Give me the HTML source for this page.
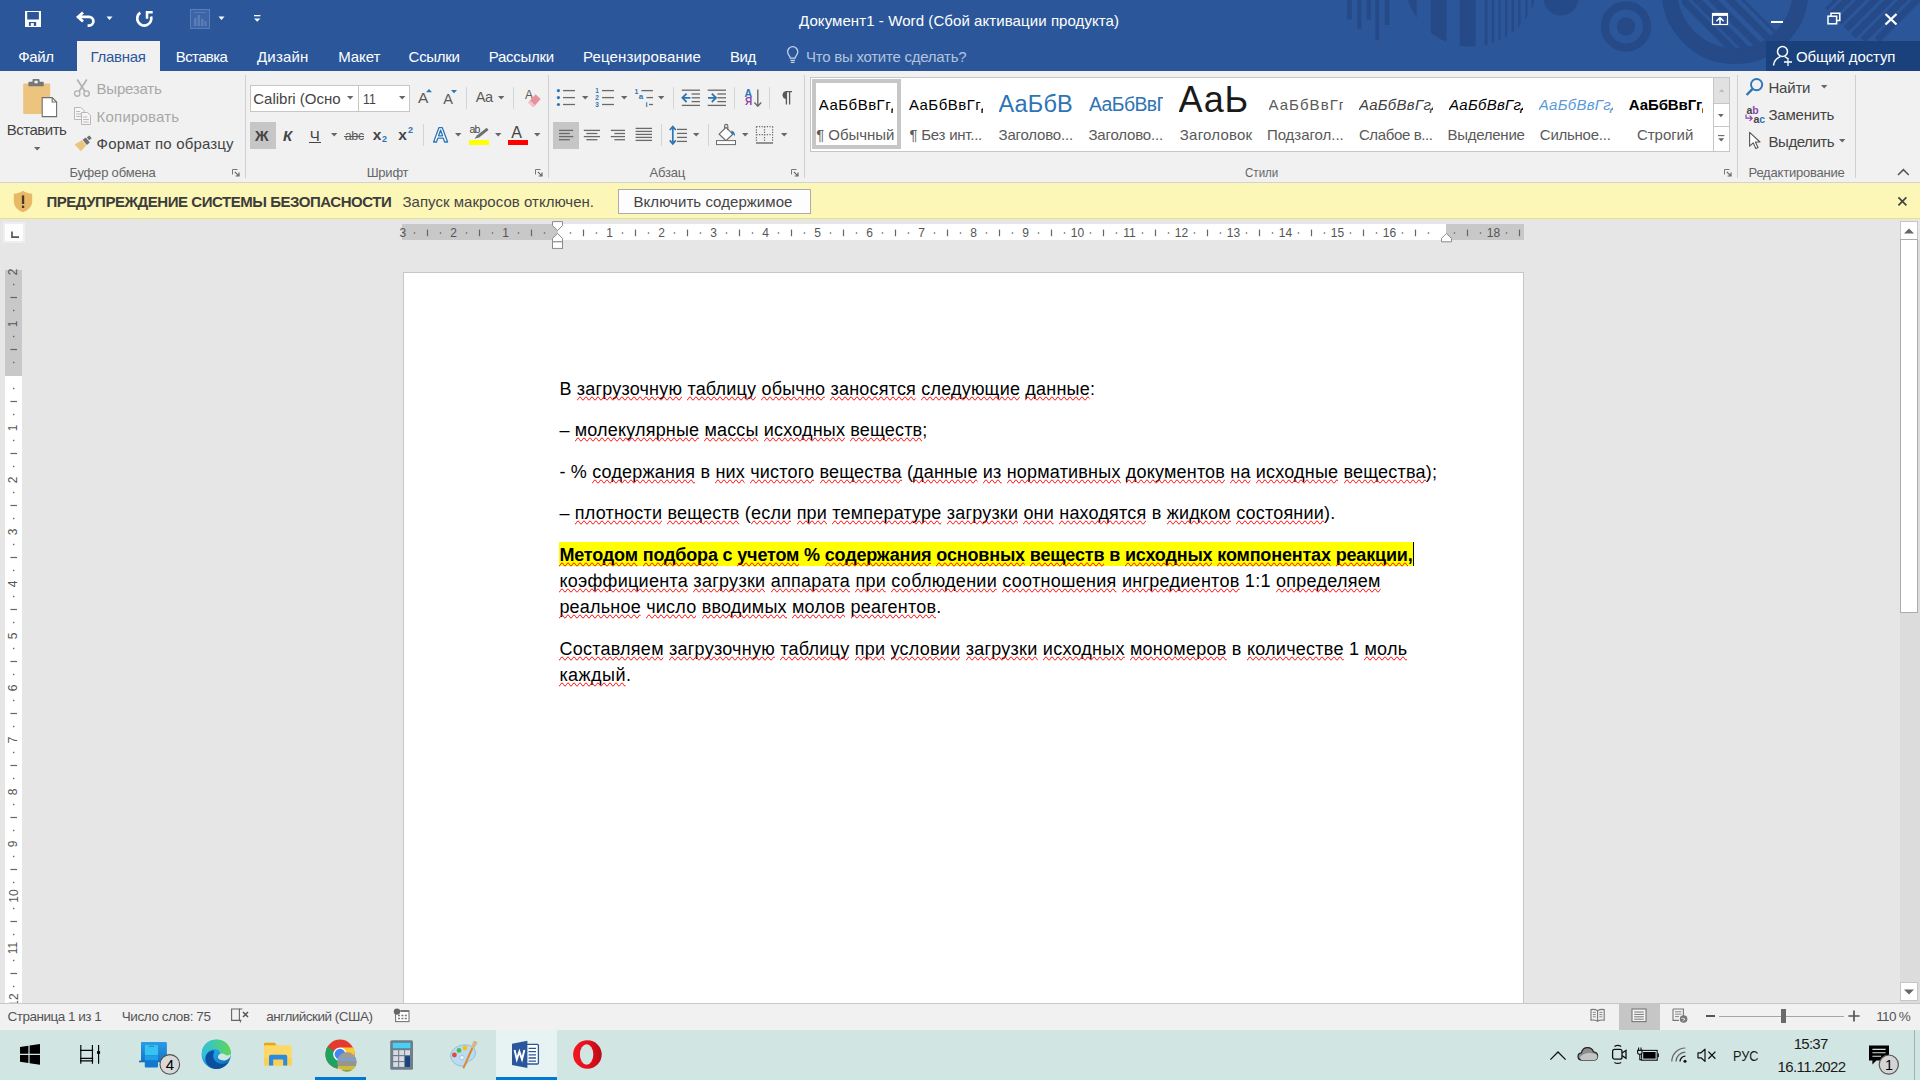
<!DOCTYPE html>
<html><head><meta charset="utf-8"><title>Word</title>
<style>
html,body{margin:0;padding:0;}
body{width:1920px;height:1080px;overflow:hidden;position:relative;background:#e6e6e6;font-family:"Liberation Sans",sans-serif;}
.t{position:absolute;white-space:nowrap;line-height:1;}
.r{position:absolute;}
svg{overflow:visible}
</style></head><body>
<div class="r" style="left:0px;top:0px;width:1920px;height:71px;background:#2b579a;"></div>
<svg class="r" style="left:1320px;top:0px" width="600" height="71" viewBox="0 0 600 71"><g fill="#254a87">
<rect x="27.2" y="0" width="4.6" height="19.5"/><rect x="37.3" y="0" width="4" height="29"/><rect x="46.7" y="0" width="4.3" height="20"/><rect x="55.3" y="0" width="3.9" height="40"/><rect x="64.7" y="0" width="4.7" height="25"/>
<clipPath id="c1"><circle cx="151.5" cy="-20" r="66.6"/></clipPath>
<g clip-path="url(#c1)"><rect x="80" y="0" width="16.7" height="50"/><rect x="110.8" y="0" width="15.6" height="50"/><rect x="139.7" y="0" width="15.9" height="50"/><rect x="164.7" y="0" width="2.8" height="50"/><rect x="171.7" y="0" width="2.4" height="50"/><rect x="178.4" y="0" width="2.3" height="50"/><rect x="185" y="0" width="2.3" height="50"/><rect x="191.6" y="0" width="2.4" height="50"/><rect x="198.3" y="0" width="2.3" height="50"/><rect x="205.3" y="0" width="2.3" height="50"/><rect x="211.6" y="0" width="2.4" height="50"/></g>
<circle cx="241" cy="-1.7" r="17.3"/>
<circle cx="306" cy="26.5" r="9.2"/>
</g>
<circle cx="306" cy="26.5" r="21.1" fill="none" stroke="#254a87" stroke-width="8.2"/>
<clipPath id="c2"><rect x="330" y="0" width="270" height="71"/></clipPath>
<g clip-path="url(#c2)">
<circle cx="415" cy="-9.6" r="65.6" fill="none" stroke="#254a87" stroke-width="16"/>
<clipPath id="c3"><circle cx="421" cy="1" r="59"/></clipPath><clipPath id="c4"><path d="M300 -125L500 75H300Z"/></clipPath>
<g clip-path="url(#c3)"><g clip-path="url(#c4)" stroke="#254a87" stroke-width="7.2" fill="none"><path d="M343 -20L443 80M357 -20L457 80M373 -20L473 80M390 -20L490 80M406 -20L506 80"/></g></g>
<clipPath id="c5"><path d="M505 8L513 0H600V41H538Z"/></clipPath>
<g clip-path="url(#c5)" stroke="#254a87" stroke-width="7" fill="none"><path d="M533 -20L473 40M547 -20L487 40M561 -20L501 40M575 -20L515 40M589 -20L529 40M603 -20L543 40M617 -20L557 40"/></g>
</g></svg>
<div class="r" style="left:0px;top:71px;width:1920px;height:112px;background:#f1f1f1;"></div>
<div class="r" style="left:0px;top:182px;width:1920px;height:1px;background:#d2d2d2;"></div>
<div class="r" style="left:77px;top:41px;width:83px;height:31px;background:#f1f1f1;"></div>
<div class="r" style="left:1766px;top:41px;width:154px;height:30px;background:#1a417c;"></div>
<svg class="r" style="left:24px;top:10px" width="18" height="18" viewBox="0 0 18 18"><path d="M1 1H17V17H1Z" fill="#fff"/><rect x="3.2" y="2" width="11.7" height="7.5" fill="#2b579a"/><rect x="4.9" y="12" width="7.3" height="3.9" fill="#2b579a"/><rect x="6.8" y="13.1" width="3" height="2.8" fill="#fff"/></svg>
<svg class="r" style="left:76px;top:11px" width="22" height="18" viewBox="0 0 22 18"><path d="M7 1.4L2 5.9L7 10.4M2.4 5.9H13A4.4 4.4 0 0 1 13 14.7H11.6" fill="none" stroke="#fff" stroke-width="2.7" stroke-linejoin="miter"/></svg>
<svg class="r" style="left:106px;top:16px" width="8" height="5" viewBox="0 0 8 5"><path d="M0.5 0.5h6l-3 3.4z" fill="#fff"/></svg>
<svg class="r" style="left:135px;top:9px" width="20" height="20" viewBox="0 0 20 20"><path d="M5.26 3.72A7.05 7.05 0 1 0 16.06 7.5" fill="none" stroke="#fff" stroke-width="2.7"/><path d="M12 9.8V3.3H17.7" fill="none" stroke="#fff" stroke-width="2.5"/></svg>
<svg class="r" style="left:189px;top:8px" width="22" height="22" viewBox="0 0 22 22"><rect x="1.5" y="1.5" width="19" height="19" fill="#3b65a6" stroke="#5a7db5" stroke-width="1"/><path d="M5 4.5h12" stroke="#5a7db5"/><rect x="5" y="10" width="2.5" height="8" fill="#5a7db5"/><rect x="8.5" y="7" width="2.5" height="11" fill="#5a7db5"/><rect x="12" y="11" width="2.5" height="7" fill="#5a7db5"/><rect x="15.5" y="13" width="2" height="5" fill="#5a7db5"/></svg>
<svg class="r" style="left:218px;top:16px" width="8" height="5" viewBox="0 0 8 5"><path d="M0.5 0.5h6l-3 3.4z" fill="#fff"/></svg>
<svg class="r" style="left:253px;top:14px" width="9" height="9" viewBox="0 0 9 9"><rect x="1" y="1" width="6.4" height="1.3" fill="#fff"/><path d="M1 4.4h6.4l-3.2 3.4z" fill="#fff"/></svg>
<div class="t" style="left:799.0px;top:12.8px;font-size:15px;color:#ffffff;letter-spacing:0.08px;">Документ1 - Word (Сбой активации продукта)</div>
<svg class="r" style="left:1711px;top:12px" width="18" height="14" viewBox="0 0 18 14"><rect x="1.5" y="1.5" width="15" height="11" fill="none" stroke="#fff" stroke-width="1.2"/><rect x="1.5" y="1.5" width="15" height="2.4" fill="#fff"/><path d="M9 5.6 L5.4 9.3 M9 5.6 L12.6 9.3 M9 6 V12" stroke="#fff" stroke-width="1.5" fill="none"/></svg>
<div class="r" style="left:1771px;top:20.5px;width:12px;height:2.5px;background:#ffffff;"></div>
<svg class="r" style="left:1827px;top:12px" width="14" height="13" viewBox="0 0 14 13"><rect x="1" y="4.2" width="8.6" height="7.6" fill="none" stroke="#fff" stroke-width="1.5"/><path d="M4 4 V1.2 H12.8 V8.6 H10" fill="none" stroke="#fff" stroke-width="1.5"/></svg>
<svg class="r" style="left:1884px;top:13px" width="14" height="13" viewBox="0 0 14 13"><path d="M1.5 1 L12.5 11.5 M12.5 1 L1.5 11.5" stroke="#fff" stroke-width="2.3"/></svg>
<div class="t" style="left:18.3px;top:48.8px;font-size:15px;color:#ffffff;letter-spacing:-0.37px;">Файл</div>
<div class="t" style="left:90.5px;top:48.8px;font-size:15px;color:#2b579a;letter-spacing:-0.30px;">Главная</div>
<div class="t" style="left:175.8px;top:48.8px;font-size:15px;color:#ffffff;letter-spacing:-0.62px;">Вставка</div>
<div class="t" style="left:257.0px;top:48.8px;font-size:15px;color:#ffffff;letter-spacing:0.18px;">Дизайн</div>
<div class="t" style="left:338.3px;top:48.8px;font-size:15px;color:#ffffff;letter-spacing:-0.11px;">Макет</div>
<div class="t" style="left:408.6px;top:48.8px;font-size:15px;color:#ffffff;letter-spacing:-0.28px;">Ссылки</div>
<div class="t" style="left:488.8px;top:48.8px;font-size:15px;color:#ffffff;letter-spacing:-0.30px;">Рассылки</div>
<div class="t" style="left:582.9px;top:48.8px;font-size:15px;color:#ffffff;letter-spacing:0.16px;">Рецензирование</div>
<div class="t" style="left:730.0px;top:48.8px;font-size:15px;color:#ffffff;letter-spacing:-0.48px;">Вид</div>
<svg class="r" style="left:786px;top:46px" width="14" height="19" viewBox="0 0 14 19"><path d="M4.3 12.2 C4.3 10 1.6 9 1.6 5.8 A5.1 5.1 0 0 1 11.8 5.8 C11.8 9 9.1 10 9.1 12.2 Z" fill="none" stroke="#c5d2e6" stroke-width="1.3"/><path d="M4.5 14.3h4.4M4.9 16.4h3.6" stroke="#c5d2e6" stroke-width="1.3"/></svg>
<div class="t" style="left:806.0px;top:48.8px;font-size:15px;color:#b3c3de;letter-spacing:-0.25px;">Что вы хотите сделать?</div>
<svg class="r" style="left:1772px;top:45px" width="22" height="22" viewBox="0 0 22 22"><circle cx="10.5" cy="6.5" r="5" fill="none" stroke="#fff" stroke-width="1.5"/><path d="M1.5 20.5 C2 14.5 6 12.6 8.2 11.6 M12.8 11.6 C14 12.2 15 12.8 15.8 13.8" fill="none" stroke="#fff" stroke-width="1.5"/><path d="M12 17h8M16 13v8" stroke="#fff" stroke-width="1.3"/></svg>
<div class="t" style="left:1796.0px;top:48.8px;font-size:15px;color:#ffffff;letter-spacing:-0.12px;">Общий доступ</div>
<div class="r" style="left:245px;top:75px;width:1px;height:103px;background:#d0d0d0;"></div>
<div class="r" style="left:548px;top:75px;width:1px;height:103px;background:#d0d0d0;"></div>
<div class="r" style="left:804px;top:75px;width:1px;height:103px;background:#d0d0d0;"></div>
<div class="r" style="left:1737px;top:75px;width:1px;height:103px;background:#d0d0d0;"></div>
<div class="r" style="left:1855px;top:75px;width:1px;height:103px;background:#d0d0d0;"></div>
<svg class="r" style="left:22px;top:78px" width="36" height="40" viewBox="0 0 36 40"><rect x="1.2" y="5.5" width="27" height="30.4" rx="1" fill="#edc47e"/>
<path d="M6.4 8.3V4.6q0-.8.8-.8h3.3V2q0-.9.9-.9h5.3q.9 0 .9.9v1.8h3.3q.8 0 .8.8v3.7z" fill="#767676"/><rect x="12.5" y="2.7" width="3.2" height="2.6" fill="#f1f1f1"/>
<path d="M20.2 19.6h10l4.4 4.4v14.6H20.2z" fill="#fff" stroke="#6e6e6e" stroke-width="1.1"/><path d="M30.2 19.6v4.4h4.4" fill="none" stroke="#6e6e6e" stroke-width="1.1"/></svg>
<div class="t" style="left:6.8px;top:122.2px;font-size:15px;color:#444444;letter-spacing:-0.50px;">Вставить</div>
<svg class="r" style="left:33.6px;top:146.6px" width="7" height="4" viewBox="0 0 7 4"><path d="M0 0h6.4l-3.2 3.4z" fill="#666"/></svg>
<svg class="r" style="left:73px;top:78px" width="18" height="20" viewBox="0 0 18 20"><path d="M4.2 1.5L12 13.5M13.8 1.5L6 13.5" stroke="#b2b2b2" stroke-width="1.7" fill="none"/><circle cx="4.2" cy="15.6" r="2.7" fill="none" stroke="#b2b2b2" stroke-width="1.4"/><circle cx="13.6" cy="15.6" r="2.7" fill="none" stroke="#b2b2b2" stroke-width="1.4"/></svg>
<div class="t" style="left:96.6px;top:80.8px;font-size:15px;color:#a8a8a8;letter-spacing:-0.23px;">Вырезать</div>
<svg class="r" style="left:73px;top:106px" width="19" height="20" viewBox="0 0 19 20"><path d="M1.5 1.5h6.5l3 3v9h-9.5z" fill="#f6f6f6" stroke="#b8b8b8" stroke-width="1"/><path d="M3.2 5.5h4M3.2 8h6M3.2 10.5h6" stroke="#c4b4c4" stroke-width="1"/><path d="M8.5 6.5h6l3 3v9h-9z" fill="#f6f6f6" stroke="#b8b8b8" stroke-width="1"/><path d="M10.2 11h4M10.2 13.5h5.6M10.2 16h5.6" stroke="#c4b4c4" stroke-width="1"/></svg>
<div class="t" style="left:96.6px;top:108.8px;font-size:15px;color:#a8a8a8;letter-spacing:0.20px;">Копировать</div>
<svg class="r" style="left:74px;top:136px" width="19" height="16" viewBox="0 0 19 16"><path d="M0.6 8.4L8 4.2L12.2 9.5L6.8 15.2Z" fill="#edc47e"/><path d="M8.6 3.8l3.2-2.2 4 5-3 2.4z" fill="#6e6e6e"/><path d="M12.8 1.2l2.7-1.6 2.2 2.7-2.6 1.9z" fill="#6e6e6e"/></svg>
<div class="t" style="left:96.6px;top:136.1px;font-size:15px;color:#444444;letter-spacing:0.15px;">Формат по образцу</div>
<div class="t" style="left:69.4px;top:166.0px;font-size:13px;color:#666666;letter-spacing:-0.19px;">Буфер обмена</div>
<svg class="r" style="left:232px;top:168.5px" width="8" height="8" viewBox="0 0 8 8"><path d="M0.5 5.5V0.5h5" fill="none" stroke="#777" stroke-width="1"/><path d="M2.8 2.8L6.8 6.8M7 3.6V7H3.6" fill="none" stroke="#666" stroke-width="1.2"/></svg>
<div class="r" style="left:250px;top:85px;width:160px;height:27px;background:#fff;box-sizing:border-box;border:1px solid #c6c6c6;"></div>
<div class="r" style="left:357.5px;top:85px;width:1px;height:27px;background:#c6c6c6;"></div>
<div class="t" style="left:253.3px;top:90.5px;font-size:15px;color:#444444;letter-spacing:-0.02px;">Calibri (Осно</div>
<svg class="r" style="left:346.5px;top:96px" width="7" height="4" viewBox="0 0 7 4"><path d="M0 0h6.4l-3.2 3.4z" fill="#666"/></svg>
<div class="t" style="left:362.5px;top:90.5px;font-size:15px;color:#444444;transform:scaleX(0.8220);transform-origin:0 0;">11</div>
<svg class="r" style="left:398.5px;top:96px" width="7" height="4" viewBox="0 0 7 4"><path d="M0 0h6.4l-3.2 3.4z" fill="#666"/></svg>
<div class="t" style="left:418.0px;top:90.4px;font-size:15.5px;color:#5a5a5a;letter-spacing:0.26px;">A</div>
<svg class="r" style="left:426px;top:89px" width="7" height="4" viewBox="0 0 7 4"><path d="M0 3.2h6l-3-3.2z" fill="#2e75b6"/></svg>
<div class="t" style="left:443.3px;top:92.4px;font-size:14.5px;color:#5a5a5a;letter-spacing:0.03px;">A</div>
<svg class="r" style="left:451px;top:89.5px" width="7" height="4" viewBox="0 0 7 4"><path d="M0 0h6l-3 3.2z" fill="#2e75b6"/></svg>
<div class="r" style="left:466px;top:87px;width:1px;height:22px;background:#d4d4d4;"></div>
<div class="r" style="left:513px;top:87px;width:1px;height:22px;background:#d4d4d4;"></div>
<div class="t" style="left:475.8px;top:90.0px;font-size:14.5px;color:#5a5a5a;letter-spacing:-0.52px;">Aa</div>
<svg class="r" style="left:497.8px;top:96px" width="7" height="4" viewBox="0 0 7 4"><path d="M0 0h6.4l-3.2 3.4z" fill="#666"/></svg>
<div class="t" style="left:525.0px;top:89.1px;font-size:12px;color:#5a5a5a;letter-spacing:-0.40px;">A</div>
<svg class="r" style="left:527px;top:93px" width="15" height="15" viewBox="0 0 15 15"><path d="M1.2 9.4L8.6 1.2L13.6 6L6.4 14.2Z" fill="#e8909c"/><path d="M1.2 9.4l1.8-2 5.2 4.8-1.8 2z" fill="#f3c3c8"/></svg>
<div class="r" style="left:250px;top:122px;width:26px;height:27px;background:#c6c6c6;"></div>
<div class="t" style="left:255.0px;top:127.5px;font-size:15px;color:#444444;letter-spacing:2.64px;font-weight:bold;">Ж</div>
<div class="t" style="left:283.0px;top:127.5px;font-size:15px;color:#444444;letter-spacing:2.78px;font-weight:bold;font-style:italic;">К</div>
<div class="t" style="left:309.7px;top:127.5px;font-size:15px;color:#444444;letter-spacing:0.80px;">Ч</div>
<div class="r" style="left:309.2px;top:141.6px;width:11.8px;height:1.3px;background:#444444;"></div>
<svg class="r" style="left:330.6px;top:133px" width="7" height="4" viewBox="0 0 7 4"><path d="M0 0h6.4l-3.2 3.4z" fill="#666"/></svg>
<div class="t" style="left:344.8px;top:129.6px;font-size:12.5px;color:#5a5a5a;letter-spacing:-0.38px;">abc</div>
<div class="r" style="left:344px;top:135.6px;width:20.4px;height:1.2px;background:#5a5a5a;"></div>
<div class="t" style="left:372.8px;top:127.1px;font-size:15.5px;color:#444444;letter-spacing:-0.42px;font-weight:bold;">x</div>
<div class="t" style="left:382.0px;top:135.4px;font-size:9px;color:#2e75b6;letter-spacing:0.50px;font-weight:bold;">2</div>
<div class="t" style="left:398.3px;top:127.1px;font-size:15.5px;color:#444444;letter-spacing:-0.42px;font-weight:bold;">x</div>
<div class="t" style="left:408.0px;top:125.9px;font-size:9px;color:#2e75b6;letter-spacing:0.50px;font-weight:bold;">2</div>
<div class="r" style="left:423px;top:124px;width:1px;height:22px;background:#d4d4d4;"></div>
<svg class="r" style="left:432px;top:126px" width="18" height="18" viewBox="0 0 18 18"><path d="M1.6 16L7 1.6h3.2L15.6 16h-3l-1.3-3.8H5.8L4.5 16z M6.6 9.8h4l-2-5.8z" fill="#fff" stroke="#2e75b6" stroke-width="1.3" stroke-linejoin="round" fill-rule="evenodd"/></svg>
<svg class="r" style="left:454.8px;top:133px" width="7" height="4" viewBox="0 0 7 4"><path d="M0 0h6.4l-3.2 3.4z" fill="#666"/></svg>
<div class="t" style="left:469.4px;top:124.1px;font-size:10.5px;color:#444444;letter-spacing:-0.74px;">ab</div>
<svg class="r" style="left:472px;top:126px" width="18" height="14" viewBox="0 0 18 14"><path d="M2.5 12.8l2.6-3.6 9.6-7.4 1.8 2.2-9.4 7.6z" fill="#6e6e6e"/></svg>
<div class="r" style="left:469px;top:140.2px;width:20px;height:4.6px;background:#ffff00;"></div>
<svg class="r" style="left:494.8px;top:133px" width="7" height="4" viewBox="0 0 7 4"><path d="M0 0h6.4l-3.2 3.4z" fill="#666"/></svg>
<div class="t" style="left:511.3px;top:124.5px;font-size:16px;color:#444444;letter-spacing:2.23px;">A</div>
<div class="r" style="left:508px;top:140.2px;width:20px;height:4.6px;background:#ff0000;"></div>
<svg class="r" style="left:534px;top:133px" width="7" height="4" viewBox="0 0 7 4"><path d="M0 0h6.4l-3.2 3.4z" fill="#666"/></svg>
<div class="t" style="left:366.7px;top:166.0px;font-size:13px;color:#666666;letter-spacing:-0.23px;">Шрифт</div>
<svg class="r" style="left:535px;top:168.5px" width="8" height="8" viewBox="0 0 8 8"><path d="M0.5 5.5V0.5h5" fill="none" stroke="#777" stroke-width="1"/><path d="M2.8 2.8L6.8 6.8M7 3.6V7H3.6" fill="none" stroke="#666" stroke-width="1.2"/></svg>
<svg class="r" style="left:0px;top:0px" width="1" height="1" viewBox="0 0 1 1"><circle cx="558.4" cy="90.6" r="1.6" fill="#2e75b6"/><path d="M563 90.6H575" stroke="#6a6a6a" stroke-width="1.3"/><circle cx="558.4" cy="97.6" r="1.6" fill="#2e75b6"/><path d="M563 97.6H575" stroke="#6a6a6a" stroke-width="1.3"/><circle cx="558.4" cy="104.5" r="1.6" fill="#2e75b6"/><path d="M563 104.5H575" stroke="#6a6a6a" stroke-width="1.3"/></svg>
<svg class="r" style="left:581.8px;top:96px" width="7" height="4" viewBox="0 0 7 4"><path d="M0 0h6.4l-3.2 3.4z" fill="#666"/></svg>
<svg class="r" style="left:0px;top:0px" width="1" height="1" viewBox="0 0 1 1"><path d="M602 90.6H614" stroke="#6a6a6a" stroke-width="1.3"/><path d="M602 97.6H614" stroke="#6a6a6a" stroke-width="1.3"/><path d="M602 104.5H614" stroke="#6a6a6a" stroke-width="1.3"/></svg>
<div class="t" style="left:595.2px;top:87.5px;font-size:6.5px;color:#2e75b6;letter-spacing:0.18px;font-weight:bold;">1</div>
<div class="t" style="left:595.2px;top:94.5px;font-size:6.5px;color:#2e75b6;letter-spacing:0.18px;font-weight:bold;">2</div>
<div class="t" style="left:595.2px;top:101.5px;font-size:6.5px;color:#2e75b6;letter-spacing:0.18px;font-weight:bold;">3</div>
<svg class="r" style="left:620.8px;top:96px" width="7" height="4" viewBox="0 0 7 4"><path d="M0 0h6.4l-3.2 3.4z" fill="#666"/></svg>
<svg class="r" style="left:0px;top:0px" width="1" height="1" viewBox="0 0 1 1"><path d="M641.4 90.6H653" stroke="#6a6a6a" stroke-width="1.3"/><path d="M646.5 97.6H653" stroke="#6a6a6a" stroke-width="1.3"/><path d="M649 104.5H653" stroke="#6a6a6a" stroke-width="1.3"/></svg>
<div class="t" style="left:634.4px;top:87.6px;font-size:7px;color:#2e75b6;letter-spacing:-0.29px;font-weight:bold;">1</div>
<div class="t" style="left:638.8px;top:93.2px;font-size:8px;color:#2e75b6;letter-spacing:0.35px;font-weight:bold;">a</div>
<div class="t" style="left:645.4px;top:100.7px;font-size:7.5px;color:#2e75b6;letter-spacing:-0.08px;font-weight:bold;">i</div>
<svg class="r" style="left:657.8px;top:96px" width="7" height="4" viewBox="0 0 7 4"><path d="M0 0h6.4l-3.2 3.4z" fill="#666"/></svg>
<div class="r" style="left:673px;top:87px;width:1px;height:22px;background:#d4d4d4;"></div>
<svg class="r" style="left:0px;top:0px" width="1" height="1" viewBox="0 0 1 1"><path d="M681.8 90.2H700" stroke="#6a6a6a" stroke-width="1.3"/><path d="M691.6 94H700" stroke="#6a6a6a" stroke-width="1.3"/><path d="M691.6 97.8H700" stroke="#6a6a6a" stroke-width="1.3"/><path d="M691.6 101.6H700" stroke="#6a6a6a" stroke-width="1.3"/><path d="M681.8 105.4H700" stroke="#6a6a6a" stroke-width="1.3"/><path d="M682.4 97.8H690.4M686.6 93.6L682.4 97.8L686.6 102" fill="none" stroke="#2e75b6" stroke-width="1.8"/><path d="M707.7 90.2H726" stroke="#6a6a6a" stroke-width="1.3"/><path d="M717.4 94H726" stroke="#6a6a6a" stroke-width="1.3"/><path d="M717.4 97.8H726" stroke="#6a6a6a" stroke-width="1.3"/><path d="M717.4 101.6H726" stroke="#6a6a6a" stroke-width="1.3"/><path d="M707.7 105.4H726" stroke="#6a6a6a" stroke-width="1.3"/><path d="M708 97.8H716M711.8 93.6L716 97.8L711.8 102" fill="none" stroke="#2e75b6" stroke-width="1.8"/></svg>
<div class="r" style="left:734px;top:87px;width:1px;height:22px;background:#d4d4d4;"></div>
<div class="t" style="left:744.6px;top:87.5px;font-size:10.5px;color:#2e75b6;letter-spacing:0.22px;font-weight:bold;">A</div>
<div class="t" style="left:745.0px;top:97.4px;font-size:10px;color:#8e44ad;letter-spacing:0.01px;font-weight:bold;">Я</div>
<svg class="r" style="left:0px;top:0px" width="1" height="1" viewBox="0 0 1 1"><path d="M757.8 89.6V106M754.4 102.6L757.8 106.2L761.2 102.6" fill="none" stroke="#6a6a6a" stroke-width="1.4"/></svg>
<div class="r" style="left:769px;top:87px;width:1px;height:22px;background:#d4d4d4;"></div>
<svg class="r" style="left:780px;top:91px" width="13" height="14" viewBox="0 0 13 14"><path d="M5.6 0.6H12M6.4 0.6V13.4M9.6 0.6V13.4" stroke="#5a5a5a" stroke-width="1.3" fill="none"/><path d="M6.4 0.6 A3.5 3.5 0 0 0 6.4 7.6Z" fill="#5a5a5a" stroke="#5a5a5a" stroke-width="1"/></svg>
<div class="r" style="left:553px;top:122px;width:26px;height:27px;background:#c6c6c6;"></div>
<svg class="r" style="left:0px;top:0px" width="1" height="1" viewBox="0 0 1 1"><path d="M559 130.4H573.2" stroke="#6a6a6a" stroke-width="1.3"/><path d="M559 133.5H569.8" stroke="#6a6a6a" stroke-width="1.3"/><path d="M559 136.6H573.2" stroke="#6a6a6a" stroke-width="1.3"/><path d="M559 139.7H569.8" stroke="#6a6a6a" stroke-width="1.3"/><path d="M583.8 130.4H600" stroke="#6a6a6a" stroke-width="1.3"/><path d="M586.4 133.5H597.4" stroke="#6a6a6a" stroke-width="1.3"/><path d="M583.8 136.6H600" stroke="#6a6a6a" stroke-width="1.3"/><path d="M586.4 139.7H597.4" stroke="#6a6a6a" stroke-width="1.3"/><path d="M610.8 130.4H625" stroke="#6a6a6a" stroke-width="1.3"/><path d="M614.4 133.5H625" stroke="#6a6a6a" stroke-width="1.3"/><path d="M610.8 136.6H625" stroke="#6a6a6a" stroke-width="1.3"/><path d="M614.4 139.7H625" stroke="#6a6a6a" stroke-width="1.3"/><path d="M635.6 128.4H652" stroke="#6a6a6a" stroke-width="1.3"/><path d="M635.6 131.4H652" stroke="#6a6a6a" stroke-width="1.3"/><path d="M635.6 134.4H652" stroke="#6a6a6a" stroke-width="1.3"/><path d="M635.6 137.4H652" stroke="#6a6a6a" stroke-width="1.3"/><path d="M635.6 140.4H652" stroke="#6a6a6a" stroke-width="1.3"/><path d="M677 129.4H687" stroke="#6a6a6a" stroke-width="1.3"/><path d="M677 133.4H687" stroke="#6a6a6a" stroke-width="1.3"/><path d="M677 137.4H687" stroke="#6a6a6a" stroke-width="1.3"/><path d="M677 141.4H687" stroke="#6a6a6a" stroke-width="1.3"/><path d="M672.8 127V143.5M669.8 130L672.8 126.6L675.8 130M669.8 140.4L672.8 143.9L675.8 140.4" fill="none" stroke="#2e75b6" stroke-width="1.7"/><path d="M719.2 134.2L726 127.4L732.8 134.2L726 140.6Z" fill="#fff" stroke="#6a6a6a" stroke-width="1.2"/><path d="M724.6 129V126a1.6 1.6 0 0 1 3.2 0V130" fill="none" stroke="#6a6a6a" stroke-width="1.1"/><path d="M731.4 130.4c2.6 0.4 3.8 2.6 3.6 6.2c-1-2-2.2-2.8-3.6-3z" fill="#2e75b6"/><rect x="716.5" y="140.6" width="19" height="4" fill="#fff" stroke="#6a6a6a" stroke-width="1"/><path d="M756.4 126.6H772.6M756.4 134.6H772.6M756.4 126.6V142.6M764.5 126.6V142.6M772.6 126.6V142.6" fill="none" stroke="#6a6a6a" stroke-width="1.2" stroke-dasharray="1.2 1.4"/><path d="M756 143H773" stroke="#6a6a6a" stroke-width="1.4"/></svg>
<div class="r" style="left:661px;top:124px;width:1px;height:22px;background:#d4d4d4;"></div>
<div class="r" style="left:708px;top:124px;width:1px;height:22px;background:#d4d4d4;"></div>
<svg class="r" style="left:692.6px;top:133px" width="7" height="4" viewBox="0 0 7 4"><path d="M0 0h6.4l-3.2 3.4z" fill="#666"/></svg>
<svg class="r" style="left:741.8px;top:133px" width="7" height="4" viewBox="0 0 7 4"><path d="M0 0h6.4l-3.2 3.4z" fill="#666"/></svg>
<svg class="r" style="left:780.8px;top:133px" width="7" height="4" viewBox="0 0 7 4"><path d="M0 0h6.4l-3.2 3.4z" fill="#666"/></svg>
<div class="t" style="left:649.4px;top:166.0px;font-size:13px;color:#666666;letter-spacing:-0.15px;">Абзац</div>
<svg class="r" style="left:791px;top:168.5px" width="8" height="8" viewBox="0 0 8 8"><path d="M0.5 5.5V0.5h5" fill="none" stroke="#777" stroke-width="1"/><path d="M2.8 2.8L6.8 6.8M7 3.6V7H3.6" fill="none" stroke="#666" stroke-width="1.2"/></svg>
<div class="r" style="left:810px;top:77px;width:920px;height:75px;background:#fff;box-sizing:border-box;border:1px solid #c6c6c6;"></div>
<div class="r" style="left:811.5px;top:79px;width:89.5px;height:70px;background:#fff;box-sizing:border-box;border:4.6px solid #c6c6c6;"></div>
<div class="r" style="left:818.8px;top:93.3px;width:74.4px;height:28px;overflow:hidden;"><div class="t" style="position:absolute;left:0;top:4px;font-size:15px;color:#000;letter-spacing:0.48px;">АаБбВвГгД</div></div>
<div class="t" style="left:816.2px;top:126.6px;font-size:15px;color:#5a5a5a;letter-spacing:-0.04px;">¶ Обычный</div>
<div class="r" style="left:908.9px;top:93.3px;width:74.3px;height:28px;overflow:hidden;"><div class="t" style="position:absolute;left:0;top:4px;font-size:15px;color:#000;letter-spacing:0.48px;">АаБбВвГгД</div></div>
<div class="t" style="left:909.5px;top:126.6px;font-size:15px;color:#5a5a5a;letter-spacing:-0.25px;">¶ Без инт...</div>
<div class="r" style="left:998.5px;top:88.7px;width:74.7px;height:39px;overflow:hidden;"><div class="t" style="position:absolute;left:0;top:4px;font-size:23.5px;color:#2e74b5;letter-spacing:0.17px;">АаБбВвГ</div></div>
<div class="t" style="left:998.5px;top:126.6px;font-size:15px;color:#5a5a5a;letter-spacing:-0.18px;">Заголово...</div>
<div class="r" style="left:1089.0px;top:90.8px;width:74.2px;height:33px;overflow:hidden;"><div class="t" style="position:absolute;left:0;top:4px;font-size:19.4px;color:#2e74b5;letter-spacing:-0.58px;">АаБбВвГг</div></div>
<div class="t" style="left:1088.4px;top:126.6px;font-size:15px;color:#5a5a5a;letter-spacing:-0.17px;">Заголово...</div>
<div class="r" style="left:1178.6px;top:78.1px;width:73.4px;height:55px;overflow:hidden;"><div class="t" style="position:absolute;left:0;top:4px;font-size:36px;color:#1a1a1a;letter-spacing:0.78px;">АаЬ</div></div>
<div class="t" style="left:1179.8px;top:126.6px;font-size:15px;color:#5a5a5a;letter-spacing:0.23px;">Заголовок</div>
<div class="r" style="left:1268.5px;top:93.3px;width:74.7px;height:28px;overflow:hidden;"><div class="t" style="position:absolute;left:0;top:4px;font-size:15px;color:#5a5a5a;letter-spacing:1.04px;">АаБбВвГгД</div></div>
<div class="t" style="left:1266.9px;top:126.6px;font-size:15px;color:#5a5a5a;letter-spacing:-0.03px;">Подзагол...</div>
<div class="r" style="left:1358.9px;top:93.3px;width:74.3px;height:28px;overflow:hidden;"><div class="t" style="position:absolute;left:0;top:4px;font-size:15px;color:#404040;letter-spacing:0.28px;font-style:italic;">АаБбВвГгД</div></div>
<div class="t" style="left:1358.9px;top:126.6px;font-size:15px;color:#5a5a5a;letter-spacing:-0.37px;">Слабое в...</div>
<div class="r" style="left:1449.0px;top:93.3px;width:74.3px;height:28px;overflow:hidden;"><div class="t" style="position:absolute;left:0;top:4px;font-size:15px;color:#000;letter-spacing:0.28px;font-style:italic;">АаБбВвГгД</div></div>
<div class="t" style="left:1447.4px;top:126.6px;font-size:15px;color:#5a5a5a;letter-spacing:-0.25px;">Выделение</div>
<div class="r" style="left:1538.8px;top:93.3px;width:74.4px;height:28px;overflow:hidden;"><div class="t" style="position:absolute;left:0;top:4px;font-size:15px;color:#5b9bd5;letter-spacing:0.28px;font-style:italic;">АаБбВвГгД</div></div>
<div class="t" style="left:1539.8px;top:126.6px;font-size:15px;color:#5a5a5a;letter-spacing:-0.25px;">Сильное...</div>
<div class="r" style="left:1628.8px;top:93.3px;width:74.4px;height:28px;overflow:hidden;"><div class="t" style="position:absolute;left:0;top:4px;font-size:15px;color:#000;letter-spacing:-0.10px;font-weight:bold;">АаБбВвГгД</div></div>
<div class="t" style="left:1637.0px;top:126.6px;font-size:15px;color:#5a5a5a;letter-spacing:-0.05px;">Строгий</div>
<div class="r" style="left:1712.5px;top:77px;width:17.5px;height:75px;background:#fff;box-sizing:border-box;border:1px solid #c6c6c6;"></div>
<div class="r" style="left:1713.5px;top:78px;width:15.5px;height:25px;background:#e1e1e1;"></div>
<div class="r" style="left:1712.5px;top:102.5px;width:17.5px;height:1px;background:#c6c6c6;"></div>
<div class="r" style="left:1712.5px;top:126px;width:17.5px;height:1px;background:#c6c6c6;"></div>
<svg class="r" style="left:1718.6px;top:89px" width="6" height="4" viewBox="0 0 6 4"><path d="M0 3h5.4l-2.7-3z" fill="#bdbdbd"/></svg>
<svg class="r" style="left:1718.4px;top:113.6px" width="6" height="4" viewBox="0 0 6 4"><path d="M0 0h5.8l-2.9 3.2z" fill="#666"/></svg>
<svg class="r" style="left:1718.2px;top:134.6px" width="7" height="8" viewBox="0 0 7 8"><path d="M0 0.6h6.4" stroke="#666" stroke-width="1.1"/><path d="M0.2 3.2h6l-3 3.3z" fill="#666"/></svg>
<div class="t" style="left:1244.5px;top:166.0px;font-size:13px;color:#666666;transform:scaleX(0.8891);transform-origin:0 0;">Стили</div>
<svg class="r" style="left:1723.6px;top:168.5px" width="8" height="8" viewBox="0 0 8 8"><path d="M0.5 5.5V0.5h5" fill="none" stroke="#777" stroke-width="1"/><path d="M2.8 2.8L6.8 6.8M7 3.6V7H3.6" fill="none" stroke="#666" stroke-width="1.2"/></svg>
<svg class="r" style="left:1745px;top:77px" width="20" height="20" viewBox="0 0 20 20"><circle cx="11.6" cy="7.6" r="5.6" fill="none" stroke="#2e75b6" stroke-width="1.9"/><path d="M7.6 11.8L1.6 18" stroke="#2e75b6" stroke-width="2.4"/></svg>
<div class="t" style="left:1768.5px;top:79.6px;font-size:15px;color:#444444;letter-spacing:-0.22px;">Найти</div>
<svg class="r" style="left:1820.8px;top:85.4px" width="7" height="4" viewBox="0 0 7 4"><path d="M0 0h6.4l-3.2 3.4z" fill="#666"/></svg>
<div class="t" style="left:1746.4px;top:104.7px;font-size:10.5px;color:#444444;font-weight:bold;">a</div>
<div class="t" style="left:1752.3px;top:104.7px;font-size:10.5px;color:#8e44ad;font-weight:bold;">b</div>
<div class="t" style="left:1753.4px;top:113.7px;font-size:10.5px;color:#444444;font-weight:bold;">a</div>
<div class="t" style="left:1759.3px;top:113.7px;font-size:10.5px;color:#2e75b6;font-weight:bold;">c</div>
<svg class="r" style="left:1745px;top:114px" width="9" height="8" viewBox="0 0 9 8"><path d="M1 0.4V4.2H7M4.6 1.6L7.2 4.2L4.6 6.8" fill="none" stroke="#8e44ad" stroke-width="1.2"/></svg>
<div class="t" style="left:1768.5px;top:107.1px;font-size:15px;color:#444444;letter-spacing:-0.21px;">Заменить</div>
<svg class="r" style="left:1748px;top:131px" width="14" height="19" viewBox="0 0 14 19"><path d="M1.6 1.4V15.2L5.2 11.8L7.8 17.6L10 16.6L7.4 11H12Z" fill="#fff" stroke="#555" stroke-width="1.1" stroke-linejoin="round"/></svg>
<div class="t" style="left:1768.5px;top:133.7px;font-size:15px;color:#444444;letter-spacing:-0.44px;">Выделить</div>
<svg class="r" style="left:1838.6px;top:138.8px" width="7" height="4" viewBox="0 0 7 4"><path d="M0 0h6.4l-3.2 3.4z" fill="#666"/></svg>
<div class="t" style="left:1748.5px;top:166.0px;font-size:13px;color:#666666;letter-spacing:-0.21px;">Редактирование</div>
<svg class="r" style="left:1897px;top:168px" width="13" height="8" viewBox="0 0 13 8"><path d="M1 7L6.4 1.6L11.8 7" fill="none" stroke="#555" stroke-width="1.5"/></svg>
<svg width="0" height="0" style="position:absolute"><defs><pattern id="sq" width="6" height="5" patternUnits="userSpaceOnUse"><path d="M-1.5 2.5Q0 5.6 1.5 2.5T4.5 2.5T7.5 2.5" fill="none" stroke="#ff0000" stroke-width="1"/></pattern></defs></svg>
<style>.d{font-size:18px;color:#000}.w{position:relative;display:inline-block}.w svg{position:absolute;left:0;top:15.8px;width:100%;height:5px;overflow:hidden}</style>
<div class="r" style="left:0px;top:183px;width:1920px;height:35px;background:#fcf7b6;"></div>
<div class="r" style="left:0px;top:218px;width:1920px;height:1px;background:#e9e08c;"></div>
<svg class="r" style="left:13px;top:190px" width="20" height="23" viewBox="0 0 20 23"><path d="M10 0.8C7.6 2.6 4.4 3.6 0.8 3.8V11.5C0.8 16.5 4.6 20.4 10 22.2C15.4 20.4 19.2 16.5 19.2 11.5V3.8C15.6 3.6 12.4 2.6 10 0.8Z" fill="#e9b867"/><rect x="8.9" y="5.4" width="2.3" height="8.6" fill="#4a3a22"/><rect x="8.9" y="15.6" width="2.3" height="2.4" fill="#4a3a22"/></svg>
<div class="t" style="left:46.4px;top:194.3px;font-size:15px;color:#3c3c3c;letter-spacing:-0.46px;font-weight:bold;">ПРЕДУПРЕЖДЕНИЕ СИСТЕМЫ БЕЗОПАСНОСТИ</div>
<div class="t" style="left:402.5px;top:194.3px;font-size:15px;color:#444;letter-spacing:0.02px;">Запуск макросов отключен.</div>
<div class="r" style="left:617.5px;top:188.5px;width:193px;height:25px;background:#fdfdfd;box-sizing:border-box;border:1px solid #ababab;"></div>
<div class="t" style="left:633.5px;top:194.3px;font-size:15px;color:#444;letter-spacing:0.05px;">Включить содержимое</div>
<svg class="r" style="left:1897px;top:196px" width="11" height="11" viewBox="0 0 11 11"><path d="M1.4 1.4L9.4 9.4M9.4 1.4L1.4 9.4" stroke="#444" stroke-width="1.7"/></svg>
<div class="r" style="left:3px;top:222px;width:22px;height:21px;background:#efefef;"></div>
<div class="r" style="left:5px;top:224px;width:18px;height:17px;background:#fdfdfd;"></div>
<svg class="r" style="left:10px;top:231px" width="10" height="8" viewBox="0 0 10 8"><path d="M2 0.6V6.2H9" fill="none" stroke="#555" stroke-width="1.7"/></svg>
<div class="r" style="left:402px;top:224px;width:1122px;height:16px;background:#fff;"></div>
<div class="r" style="left:402px;top:224px;width:155.5px;height:16px;background:#c8c8c8;"></div>
<div class="r" style="left:1446px;top:224px;width:78px;height:16px;background:#c8c8c8;"></div>
<div class="t" style="left:450.2px;top:226.8px;font-size:12px;color:#555;">2</div>
<div class="t" style="left:502.2px;top:226.8px;font-size:12px;color:#555;">1</div>
<div class="t" style="left:606.2px;top:226.8px;font-size:12px;color:#555;">1</div>
<div class="t" style="left:658.2px;top:226.8px;font-size:12px;color:#555;">2</div>
<div class="t" style="left:710.2px;top:226.8px;font-size:12px;color:#555;">3</div>
<div class="t" style="left:762.2px;top:226.8px;font-size:12px;color:#555;">4</div>
<div class="t" style="left:814.2px;top:226.8px;font-size:12px;color:#555;">5</div>
<div class="t" style="left:866.2px;top:226.8px;font-size:12px;color:#555;">6</div>
<div class="t" style="left:918.2px;top:226.8px;font-size:12px;color:#555;">7</div>
<div class="t" style="left:970.2px;top:226.8px;font-size:12px;color:#555;">8</div>
<div class="t" style="left:1022.2px;top:226.8px;font-size:12px;color:#555;">9</div>
<div class="t" style="left:1070.8px;top:226.8px;font-size:12px;color:#555;">10</div>
<div class="t" style="left:1123.3px;top:226.8px;font-size:12px;color:#555;">11</div>
<div class="t" style="left:1174.8px;top:226.8px;font-size:12px;color:#555;">12</div>
<div class="t" style="left:1226.8px;top:226.8px;font-size:12px;color:#555;">13</div>
<div class="t" style="left:1278.8px;top:226.8px;font-size:12px;color:#555;">14</div>
<div class="t" style="left:1330.8px;top:226.8px;font-size:12px;color:#555;">15</div>
<div class="t" style="left:1382.8px;top:226.8px;font-size:12px;color:#555;">16</div>
<div class="t" style="left:1486.8px;top:226.8px;font-size:12px;color:#555;">18</div>
<div class="t" style="left:399.4px;top:226.8px;font-size:12px;color:#555;">3</div>
<svg class="r" style="left:0px;top:0px" width="1" height="1" viewBox="0 0 1 1"><rect x="413.8" y="232.3" width="1.4" height="1.4" fill="#666"/><rect x="426.9" y="229.6" width="1.2" height="6.6" fill="#666"/><rect x="439.8" y="232.3" width="1.4" height="1.4" fill="#666"/><rect x="465.8" y="232.3" width="1.4" height="1.4" fill="#666"/><rect x="478.9" y="229.6" width="1.2" height="6.6" fill="#666"/><rect x="491.8" y="232.3" width="1.4" height="1.4" fill="#666"/><rect x="517.8" y="232.3" width="1.4" height="1.4" fill="#666"/><rect x="530.9" y="229.6" width="1.2" height="6.6" fill="#666"/><rect x="543.8" y="232.3" width="1.4" height="1.4" fill="#666"/><rect x="569.8" y="232.3" width="1.4" height="1.4" fill="#666"/><rect x="582.9" y="229.6" width="1.2" height="6.6" fill="#666"/><rect x="595.8" y="232.3" width="1.4" height="1.4" fill="#666"/><rect x="621.8" y="232.3" width="1.4" height="1.4" fill="#666"/><rect x="634.9" y="229.6" width="1.2" height="6.6" fill="#666"/><rect x="647.8" y="232.3" width="1.4" height="1.4" fill="#666"/><rect x="673.8" y="232.3" width="1.4" height="1.4" fill="#666"/><rect x="686.9" y="229.6" width="1.2" height="6.6" fill="#666"/><rect x="699.8" y="232.3" width="1.4" height="1.4" fill="#666"/><rect x="725.8" y="232.3" width="1.4" height="1.4" fill="#666"/><rect x="738.9" y="229.6" width="1.2" height="6.6" fill="#666"/><rect x="751.8" y="232.3" width="1.4" height="1.4" fill="#666"/><rect x="777.8" y="232.3" width="1.4" height="1.4" fill="#666"/><rect x="790.9" y="229.6" width="1.2" height="6.6" fill="#666"/><rect x="803.8" y="232.3" width="1.4" height="1.4" fill="#666"/><rect x="829.8" y="232.3" width="1.4" height="1.4" fill="#666"/><rect x="842.9" y="229.6" width="1.2" height="6.6" fill="#666"/><rect x="855.8" y="232.3" width="1.4" height="1.4" fill="#666"/><rect x="881.8" y="232.3" width="1.4" height="1.4" fill="#666"/><rect x="894.9" y="229.6" width="1.2" height="6.6" fill="#666"/><rect x="907.8" y="232.3" width="1.4" height="1.4" fill="#666"/><rect x="933.8" y="232.3" width="1.4" height="1.4" fill="#666"/><rect x="946.9" y="229.6" width="1.2" height="6.6" fill="#666"/><rect x="959.8" y="232.3" width="1.4" height="1.4" fill="#666"/><rect x="985.8" y="232.3" width="1.4" height="1.4" fill="#666"/><rect x="998.9" y="229.6" width="1.2" height="6.6" fill="#666"/><rect x="1011.8" y="232.3" width="1.4" height="1.4" fill="#666"/><rect x="1037.8" y="232.3" width="1.4" height="1.4" fill="#666"/><rect x="1050.9" y="229.6" width="1.2" height="6.6" fill="#666"/><rect x="1063.8" y="232.3" width="1.4" height="1.4" fill="#666"/><rect x="1089.8" y="232.3" width="1.4" height="1.4" fill="#666"/><rect x="1102.9" y="229.6" width="1.2" height="6.6" fill="#666"/><rect x="1115.8" y="232.3" width="1.4" height="1.4" fill="#666"/><rect x="1141.8" y="232.3" width="1.4" height="1.4" fill="#666"/><rect x="1154.9" y="229.6" width="1.2" height="6.6" fill="#666"/><rect x="1167.8" y="232.3" width="1.4" height="1.4" fill="#666"/><rect x="1193.8" y="232.3" width="1.4" height="1.4" fill="#666"/><rect x="1206.9" y="229.6" width="1.2" height="6.6" fill="#666"/><rect x="1219.8" y="232.3" width="1.4" height="1.4" fill="#666"/><rect x="1245.8" y="232.3" width="1.4" height="1.4" fill="#666"/><rect x="1258.9" y="229.6" width="1.2" height="6.6" fill="#666"/><rect x="1271.8" y="232.3" width="1.4" height="1.4" fill="#666"/><rect x="1297.8" y="232.3" width="1.4" height="1.4" fill="#666"/><rect x="1310.9" y="229.6" width="1.2" height="6.6" fill="#666"/><rect x="1323.8" y="232.3" width="1.4" height="1.4" fill="#666"/><rect x="1349.8" y="232.3" width="1.4" height="1.4" fill="#666"/><rect x="1362.9" y="229.6" width="1.2" height="6.6" fill="#666"/><rect x="1375.8" y="232.3" width="1.4" height="1.4" fill="#666"/><rect x="1401.8" y="232.3" width="1.4" height="1.4" fill="#666"/><rect x="1414.9" y="229.6" width="1.2" height="6.6" fill="#666"/><rect x="1427.8" y="232.3" width="1.4" height="1.4" fill="#666"/><rect x="1453.8" y="232.3" width="1.4" height="1.4" fill="#666"/><rect x="1466.9" y="229.6" width="1.2" height="6.6" fill="#666"/><rect x="1479.8" y="232.3" width="1.4" height="1.4" fill="#666"/><rect x="1505.8" y="232.3" width="1.4" height="1.4" fill="#666"/><rect x="1518.9" y="229.6" width="1.2" height="6.6" fill="#666"/><path d="M552.5 221.6H562.5V225.6L557.5 230.6L552.5 225.6Z" fill="#fff" stroke="#8a8a8a" stroke-width="1"/><path d="M552.5 241.8V238.4L557.5 233.4L562.5 238.4V241.8Z" fill="#fff" stroke="#8a8a8a" stroke-width="1"/><rect x="552.5" y="241.8" width="10" height="6.6" fill="#fff" stroke="#8a8a8a" stroke-width="1"/><path d="M1441.5 241.8V238.4L1446.5 233.4L1451.5 238.4V241.8Z" fill="#fff" stroke="#8a8a8a" stroke-width="1"/></svg>
<div class="r" style="left:5px;top:270px;width:17px;height:733px;background:#fff;"></div>
<div class="r" style="left:5px;top:270px;width:17px;height:105.5px;background:#c8c8c8;"></div>
<div class="t" style="left:10.2px;top:265.5px;width:6.7px;font-size:12px;color:#555;transform:rotate(-90deg);transform-origin:50% 50%;">2</div>
<div class="t" style="left:10.2px;top:317.5px;width:6.7px;font-size:12px;color:#555;transform:rotate(-90deg);transform-origin:50% 50%;">1</div>
<div class="t" style="left:10.2px;top:421.5px;width:6.7px;font-size:12px;color:#555;transform:rotate(-90deg);transform-origin:50% 50%;">1</div>
<div class="t" style="left:10.2px;top:473.5px;width:6.7px;font-size:12px;color:#555;transform:rotate(-90deg);transform-origin:50% 50%;">2</div>
<div class="t" style="left:10.2px;top:525.5px;width:6.7px;font-size:12px;color:#555;transform:rotate(-90deg);transform-origin:50% 50%;">3</div>
<div class="t" style="left:10.2px;top:577.5px;width:6.7px;font-size:12px;color:#555;transform:rotate(-90deg);transform-origin:50% 50%;">4</div>
<div class="t" style="left:10.2px;top:629.5px;width:6.7px;font-size:12px;color:#555;transform:rotate(-90deg);transform-origin:50% 50%;">5</div>
<div class="t" style="left:10.2px;top:681.5px;width:6.7px;font-size:12px;color:#555;transform:rotate(-90deg);transform-origin:50% 50%;">6</div>
<div class="t" style="left:10.2px;top:733.5px;width:6.7px;font-size:12px;color:#555;transform:rotate(-90deg);transform-origin:50% 50%;">7</div>
<div class="t" style="left:10.2px;top:785.5px;width:6.7px;font-size:12px;color:#555;transform:rotate(-90deg);transform-origin:50% 50%;">8</div>
<div class="t" style="left:10.2px;top:837.5px;width:6.7px;font-size:12px;color:#555;transform:rotate(-90deg);transform-origin:50% 50%;">9</div>
<div class="t" style="left:6.8px;top:889.5px;width:13.3px;font-size:12px;color:#555;transform:rotate(-90deg);transform-origin:50% 50%;">10</div>
<div class="t" style="left:7.3px;top:941.5px;width:12.5px;font-size:12px;color:#555;transform:rotate(-90deg);transform-origin:50% 50%;">11</div>
<div class="t" style="left:6.8px;top:993.5px;width:13.3px;font-size:12px;color:#555;transform:rotate(-90deg);transform-origin:50% 50%;">12</div>
<svg class="r" style="left:0px;top:0px" width="1" height="1" viewBox="0 0 1 1"><rect x="13" y="283.8" width="1.4" height="1.4" fill="#666"/><rect x="10.4" y="296.9" width="6.6" height="1.2" fill="#666"/><rect x="13" y="309.8" width="1.4" height="1.4" fill="#666"/><rect x="13" y="335.8" width="1.4" height="1.4" fill="#666"/><rect x="10.4" y="348.9" width="6.6" height="1.2" fill="#666"/><rect x="13" y="361.8" width="1.4" height="1.4" fill="#666"/><rect x="13" y="387.8" width="1.4" height="1.4" fill="#666"/><rect x="10.4" y="400.9" width="6.6" height="1.2" fill="#666"/><rect x="13" y="413.8" width="1.4" height="1.4" fill="#666"/><rect x="13" y="439.8" width="1.4" height="1.4" fill="#666"/><rect x="10.4" y="452.9" width="6.6" height="1.2" fill="#666"/><rect x="13" y="465.8" width="1.4" height="1.4" fill="#666"/><rect x="13" y="491.8" width="1.4" height="1.4" fill="#666"/><rect x="10.4" y="504.9" width="6.6" height="1.2" fill="#666"/><rect x="13" y="517.8" width="1.4" height="1.4" fill="#666"/><rect x="13" y="543.8" width="1.4" height="1.4" fill="#666"/><rect x="10.4" y="556.9" width="6.6" height="1.2" fill="#666"/><rect x="13" y="569.8" width="1.4" height="1.4" fill="#666"/><rect x="13" y="595.8" width="1.4" height="1.4" fill="#666"/><rect x="10.4" y="608.9" width="6.6" height="1.2" fill="#666"/><rect x="13" y="621.8" width="1.4" height="1.4" fill="#666"/><rect x="13" y="647.8" width="1.4" height="1.4" fill="#666"/><rect x="10.4" y="660.9" width="6.6" height="1.2" fill="#666"/><rect x="13" y="673.8" width="1.4" height="1.4" fill="#666"/><rect x="13" y="699.8" width="1.4" height="1.4" fill="#666"/><rect x="10.4" y="712.9" width="6.6" height="1.2" fill="#666"/><rect x="13" y="725.8" width="1.4" height="1.4" fill="#666"/><rect x="13" y="751.8" width="1.4" height="1.4" fill="#666"/><rect x="10.4" y="764.9" width="6.6" height="1.2" fill="#666"/><rect x="13" y="777.8" width="1.4" height="1.4" fill="#666"/><rect x="13" y="803.8" width="1.4" height="1.4" fill="#666"/><rect x="10.4" y="816.9" width="6.6" height="1.2" fill="#666"/><rect x="13" y="829.8" width="1.4" height="1.4" fill="#666"/><rect x="13" y="855.8" width="1.4" height="1.4" fill="#666"/><rect x="10.4" y="868.9" width="6.6" height="1.2" fill="#666"/><rect x="13" y="881.8" width="1.4" height="1.4" fill="#666"/><rect x="13" y="907.8" width="1.4" height="1.4" fill="#666"/><rect x="10.4" y="920.9" width="6.6" height="1.2" fill="#666"/><rect x="13" y="933.8" width="1.4" height="1.4" fill="#666"/><rect x="13" y="959.8" width="1.4" height="1.4" fill="#666"/><rect x="10.4" y="972.9" width="6.6" height="1.2" fill="#666"/><rect x="13" y="985.8" width="1.4" height="1.4" fill="#666"/></svg>
<div class="r" style="left:403px;top:272px;width:1121px;height:731px;background:#fff;box-sizing:border-box;border:1px solid #c6c6c6;border-bottom:none;"></div>
<div class="r" style="left:559px;top:541.5px;width:854.6px;height:24.6px;background:#ffff00;"></div>
<div class="t d" style="left:559.4px;top:379.8px;letter-spacing:0.203px;">В <span class="w">загрузочную<svg><rect width="100%" height="5" fill="url(#sq)"/></svg></span> <span class="w">таблицу<svg><rect width="100%" height="5" fill="url(#sq)"/></svg></span> <span class="w">обычно<svg><rect width="100%" height="5" fill="url(#sq)"/></svg></span> <span class="w">заносятся<svg><rect width="100%" height="5" fill="url(#sq)"/></svg></span> <span class="w">следующие<svg><rect width="100%" height="5" fill="url(#sq)"/></svg></span> <span class="w">данные<svg><rect width="100%" height="5" fill="url(#sq)"/></svg></span>:</div>
<div class="t d" style="left:559.4px;top:421.3px;letter-spacing:0.178px;">– <span class="w">молекулярные<svg><rect width="100%" height="5" fill="url(#sq)"/></svg></span> <span class="w">массы<svg><rect width="100%" height="5" fill="url(#sq)"/></svg></span> <span class="w">исходных<svg><rect width="100%" height="5" fill="url(#sq)"/></svg></span> <span class="w">веществ<svg><rect width="100%" height="5" fill="url(#sq)"/></svg></span>;</div>
<div class="t d" style="left:559.4px;top:462.8px;letter-spacing:0.197px;">- % <span class="w">содержания<svg><rect width="100%" height="5" fill="url(#sq)"/></svg></span> в <span class="w">них<svg><rect width="100%" height="5" fill="url(#sq)"/></svg></span> <span class="w">чистого<svg><rect width="100%" height="5" fill="url(#sq)"/></svg></span> <span class="w">вещества<svg><rect width="100%" height="5" fill="url(#sq)"/></svg></span> (<span class="w">данные<svg><rect width="100%" height="5" fill="url(#sq)"/></svg></span> <span class="w">из<svg><rect width="100%" height="5" fill="url(#sq)"/></svg></span> <span class="w">нормативных<svg><rect width="100%" height="5" fill="url(#sq)"/></svg></span> <span class="w">документов<svg><rect width="100%" height="5" fill="url(#sq)"/></svg></span> <span class="w">на<svg><rect width="100%" height="5" fill="url(#sq)"/></svg></span> <span class="w">исходные<svg><rect width="100%" height="5" fill="url(#sq)"/></svg></span> <span class="w">вещества<svg><rect width="100%" height="5" fill="url(#sq)"/></svg></span>);</div>
<div class="t d" style="left:559.4px;top:504.3px;letter-spacing:0.202px;">– <span class="w">плотности<svg><rect width="100%" height="5" fill="url(#sq)"/></svg></span> <span class="w">веществ<svg><rect width="100%" height="5" fill="url(#sq)"/></svg></span> (<span class="w">если<svg><rect width="100%" height="5" fill="url(#sq)"/></svg></span> <span class="w">при<svg><rect width="100%" height="5" fill="url(#sq)"/></svg></span> <span class="w">температуре<svg><rect width="100%" height="5" fill="url(#sq)"/></svg></span> <span class="w">загрузки<svg><rect width="100%" height="5" fill="url(#sq)"/></svg></span> <span class="w">они<svg><rect width="100%" height="5" fill="url(#sq)"/></svg></span> <span class="w">находятся<svg><rect width="100%" height="5" fill="url(#sq)"/></svg></span> в <span class="w">жидком<svg><rect width="100%" height="5" fill="url(#sq)"/></svg></span> <span class="w">состоянии<svg><rect width="100%" height="5" fill="url(#sq)"/></svg></span>).</div>
<div class="t d" style="left:559.4px;top:545.8px;letter-spacing:-0.164px;font-weight:bold;"><span class="w">Методом<svg><rect width="100%" height="5" fill="url(#sq)"/></svg></span> <span class="w">подбора<svg><rect width="100%" height="5" fill="url(#sq)"/></svg></span> с <span class="w">учетом<svg><rect width="100%" height="5" fill="url(#sq)"/></svg></span> % <span class="w">содержания<svg><rect width="100%" height="5" fill="url(#sq)"/></svg></span> <span class="w">основных<svg><rect width="100%" height="5" fill="url(#sq)"/></svg></span> <span class="w">веществ<svg><rect width="100%" height="5" fill="url(#sq)"/></svg></span> в <span class="w">исходных<svg><rect width="100%" height="5" fill="url(#sq)"/></svg></span> <span class="w">компонентах<svg><rect width="100%" height="5" fill="url(#sq)"/></svg></span> <span class="w">реакции<svg><rect width="100%" height="5" fill="url(#sq)"/></svg></span>,</div>
<div class="t d" style="left:559.4px;top:571.8px;letter-spacing:0.280px;"><span class="w">коэффициента<svg><rect width="100%" height="5" fill="url(#sq)"/></svg></span> <span class="w">загрузки<svg><rect width="100%" height="5" fill="url(#sq)"/></svg></span> <span class="w">аппарата<svg><rect width="100%" height="5" fill="url(#sq)"/></svg></span> <span class="w">при<svg><rect width="100%" height="5" fill="url(#sq)"/></svg></span> <span class="w">соблюдении<svg><rect width="100%" height="5" fill="url(#sq)"/></svg></span> <span class="w">соотношения<svg><rect width="100%" height="5" fill="url(#sq)"/></svg></span> <span class="w">ингредиентов<svg><rect width="100%" height="5" fill="url(#sq)"/></svg></span> 1:1 <span class="w">определяем<svg><rect width="100%" height="5" fill="url(#sq)"/></svg></span></div>
<div class="t d" style="left:559.4px;top:598.3px;letter-spacing:0.213px;"><span class="w">реальное<svg><rect width="100%" height="5" fill="url(#sq)"/></svg></span> <span class="w">число<svg><rect width="100%" height="5" fill="url(#sq)"/></svg></span> <span class="w">вводимых<svg><rect width="100%" height="5" fill="url(#sq)"/></svg></span> <span class="w">молов<svg><rect width="100%" height="5" fill="url(#sq)"/></svg></span> <span class="w">реагентов<svg><rect width="100%" height="5" fill="url(#sq)"/></svg></span>.</div>
<div class="t d" style="left:559.4px;top:639.8px;letter-spacing:0.252px;"><span class="w">Составляем<svg><rect width="100%" height="5" fill="url(#sq)"/></svg></span> <span class="w">загрузочную<svg><rect width="100%" height="5" fill="url(#sq)"/></svg></span> <span class="w">таблицу<svg><rect width="100%" height="5" fill="url(#sq)"/></svg></span> <span class="w">при<svg><rect width="100%" height="5" fill="url(#sq)"/></svg></span> <span class="w">условии<svg><rect width="100%" height="5" fill="url(#sq)"/></svg></span> <span class="w">загрузки<svg><rect width="100%" height="5" fill="url(#sq)"/></svg></span> <span class="w">исходных<svg><rect width="100%" height="5" fill="url(#sq)"/></svg></span> <span class="w">мономеров<svg><rect width="100%" height="5" fill="url(#sq)"/></svg></span> в <span class="w">количестве<svg><rect width="100%" height="5" fill="url(#sq)"/></svg></span> 1 <span class="w">моль<svg><rect width="100%" height="5" fill="url(#sq)"/></svg></span></div>
<div class="t d" style="left:559.4px;top:665.8px;letter-spacing:0.454px;"><span class="w">каждый<svg><rect width="100%" height="5" fill="url(#sq)"/></svg></span>.</div>
<div class="r" style="left:1412.8px;top:541.5px;width:1.4px;height:24.6px;background:#000;"></div>
<div class="r" style="left:1900px;top:240px;width:20px;height:763px;background:#dcdcdc;"></div>
<div class="r" style="left:1900px;top:221px;width:18px;height:19px;background:#fff;box-sizing:border-box;border:1px solid #c6c6c6;"></div>
<svg class="r" style="left:1904px;top:228px" width="10" height="6" viewBox="0 0 10 6"><path d="M0 5.4H10L5 0.4Z" fill="#666"/></svg>
<div class="r" style="left:1900px;top:239px;width:18px;height:374px;background:#fff;box-sizing:border-box;border:1px solid #ababab;"></div>
<div class="r" style="left:1900px;top:982px;width:18px;height:19px;background:#fff;box-sizing:border-box;border:1px solid #c6c6c6;"></div>
<svg class="r" style="left:1904px;top:989px" width="10" height="6" viewBox="0 0 10 6"><path d="M0 0.4H10L5 5.4Z" fill="#666"/></svg>
<div class="r" style="left:0px;top:1003px;width:1920px;height:27px;background:#f1f1f1;"></div>
<div class="r" style="left:0px;top:1003px;width:1920px;height:1px;background:#c8c8c8;"></div>
<div class="t" style="left:7.5px;top:1009.6px;font-size:13.5px;color:#555;letter-spacing:-0.49px;">Страница 1 из 1</div>
<div class="t" style="left:121.8px;top:1009.6px;font-size:13.5px;color:#555;letter-spacing:-0.42px;">Число слов: 75</div>
<svg class="r" style="left:231px;top:1008px" width="19" height="15" viewBox="0 0 19 15"><path d="M0.6 1H8.4V12.4H0.6Z" fill="none" stroke="#666" stroke-width="1.1"/><path d="M8.4 1H11.4M8.4 12.4H10.4M9.4 12.4V14.4" fill="none" stroke="#666" stroke-width="1.1"/><path d="M12 4L17 9M17 4L12 9" stroke="#555" stroke-width="1.5"/></svg>
<div class="t" style="left:266.3px;top:1009.6px;font-size:13.5px;color:#555;letter-spacing:-0.50px;">английский (США)</div>
<svg class="r" style="left:393px;top:1008px" width="17" height="15" viewBox="0 0 17 15"><rect x="2.6" y="3" width="13.4" height="10.6" fill="#fff" stroke="#777" stroke-width="1.1"/><circle cx="4" cy="3.6" r="3.2" fill="#666"/><path d="M7.6 3H16" stroke="#777" stroke-width="2"/><path d="M5 7.4h2M8.4 7.4h2M11.8 7.4h2M5 10.6h2M8.4 10.6h2M11.8 10.6h2" stroke="#777" stroke-width="1.5"/></svg>
<div class="r" style="left:1619px;top:1004px;width:41px;height:26px;background:#c6c6c6;"></div>
<svg class="r" style="left:1590px;top:1008px" width="16" height="15" viewBox="0 0 16 15"><path d="M1 1.6C3.6 1 5.6 1.4 7.6 2.6C9.6 1.4 11.6 1 14.2 1.6V12.2C11.6 11.6 9.6 12 7.6 13.2C5.6 12 3.6 11.6 1 12.2Z M7.6 2.6V13.2" fill="none" stroke="#777" stroke-width="1.1"/><path d="M2.8 4.4h3M2.8 6.6h3M2.8 8.8h3M9.4 4.4h3M9.4 6.6h3M9.4 8.8h3" stroke="#888" stroke-width="1"/></svg>
<svg class="r" style="left:1631px;top:1008px" width="16" height="15" viewBox="0 0 16 15"><rect x="1" y="1" width="14" height="12.6" fill="#f4f4f4" stroke="#777" stroke-width="1.1"/><path d="M3.2 4h9.6M3.2 6.4h9.6M3.2 8.8h9.6M3.2 11.2h9.6" stroke="#777" stroke-width="1"/></svg>
<svg class="r" style="left:1672px;top:1008px" width="17" height="16" viewBox="0 0 17 16"><path d="M1 1H11.4V8M1 1V12.4H7" fill="none" stroke="#777" stroke-width="1.1"/><path d="M3 3.8h6.4M3 6.2h6.4M3 8.6h4" stroke="#888" stroke-width="1"/><circle cx="11.6" cy="11" r="3.8" fill="#777"/><path d="M9.4 10.4c1.4-.6 2 .8 3.4.2M10.6 13c.4-1 1.6-.8 2.4-1.6" stroke="#f1f1f1" stroke-width=".9" fill="none"/></svg>
<div class="r" style="left:1705.5px;top:1015px;width:9.5px;height:1.8px;background:#555;"></div>
<div class="r" style="left:1719px;top:1015.5px;width:125px;height:1px;background:#a6a6a6;"></div>
<div class="r" style="left:1781.4px;top:1008.6px;width:4.8px;height:14px;background:#6a6a6a;"></div>
<svg class="r" style="left:1848px;top:1010px" width="12" height="12" viewBox="0 0 12 12"><path d="M0.4 6H11.6M6 0.4V11.6" stroke="#555" stroke-width="1.7"/></svg>
<div class="t" style="left:1876.3px;top:1010.0px;font-size:13.5px;color:#555;letter-spacing:-0.71px;">110 %</div>
<div class="r" style="left:0px;top:1030px;width:1920px;height:50px;background:#d1e6e2;"></div>
<div class="r" style="left:496px;top:1030px;width:61px;height:50px;background:#e7f3f2;"></div>
<div class="r" style="left:315px;top:1077px;width:51.3px;height:3px;background:#0078d7;"></div>
<div class="r" style="left:496px;top:1077px;width:61px;height:3px;background:#0078d7;"></div>
<svg class="r" style="left:20px;top:1044px" width="21" height="21" viewBox="0 0 21 21"><path d="M0 3L8.4 1.8V9.8H0Z M9.6 1.6L20 0V9.8H9.6Z M0 11H8.4V19L0 17.8Z M9.6 11H20V20.8L9.6 19.2Z" fill="#000"/></svg>
<svg class="r" style="left:79px;top:1044px" width="22" height="21" viewBox="0 0 22 21"><path d="M1.8 1V19.8M13.4 1V19.8M1 6.3H14.2M1 14.3H14.2M1 16.8H14.2" stroke="#000" stroke-width="1.15" fill="none"/><path d="M19.6 1V19.8" stroke="#000" stroke-width="1.15"/><rect x="18" y="7.2" width="3.1" height="2.6" fill="#000"/></svg>
<svg class="r" style="left:139px;top:1041px" width="40" height="34" viewBox="0 0 40 34"><defs><linearGradient id="mg" x1="0" y1="0" x2="0" y2="1"><stop offset="0" stop-color="#2c9ce8"/><stop offset="1" stop-color="#1673c4"/></linearGradient></defs><rect x="2" y="0.9" width="25.9" height="19.6" rx="1" fill="url(#mg)"/><rect x="0" y="19.6" width="28.5" height="1.7" fill="#1a6bb4"/><rect x="5.8" y="3.8" width="13.2" height="22.7" rx="0.8" fill="#1379cc"/><rect x="5.8" y="3.8" width="13.2" height="10.4" rx="0.8" fill="#38c2f2"/><rect x="5.8" y="14.2" width="13.2" height="5" fill="#1f9fe6"/><rect x="9.8" y="4.8" width="5.4" height="0.9" fill="#1a7fc4"/><circle cx="30.8" cy="23.4" r="9.8" fill="#d8d8d8" stroke="#505050" stroke-width="1.1"/></svg>
<div class="t" style="left:165.7px;top:1057.1px;font-size:15px;color:#000;">4</div>
<svg class="r" style="left:201px;top:1039px" width="31" height="31" viewBox="0 0 31 31"><defs><linearGradient id="eg" x1="0" y1="0" x2="1" y2="1"><stop offset="0" stop-color="#35c1f1"/><stop offset=".5" stop-color="#1b9de2"/><stop offset="1" stop-color="#0c59a4"/></linearGradient><linearGradient id="eg2" x1="0" y1="0" x2="1" y2="0"><stop offset="0" stop-color="#2fbfe0"/><stop offset="1" stop-color="#5fd657"/></linearGradient></defs><circle cx="15.2" cy="15.4" r="14.6" fill="url(#eg)"/><path d="M1 12C3 4 9 0.6 15.4 0.6C24 0.6 30 7 29.8 13.6C29.6 18 26 20.4 22 20.4C18.6 20.4 17.6 18.6 18.4 17.2C19.4 15.6 19.4 13.2 17.6 11.6C15 9.2 9.6 9.6 6.4 13.2C4.4 15.6 4 18.4 4.6 21C2 18.6 0.4 15.6 1 12Z" fill="url(#eg2)"/><path d="M12.6 14.4C11.4 18.2 13.4 23.6 19.6 24.8C23 25.4 26 24.2 27.6 22.6C25 27.6 20 30.2 14.8 30C8.4 29.6 4.4 24.8 4.4 19.6C4.4 15 8 11.6 12 11.4C14.4 11.3 13 13 12.6 14.4Z" fill="#0b4f9e"/><path d="M17 17.6C17.4 14.6 21.6 13.6 24 15.6C26 17.2 29 16.4 29.8 14.6C30 18 27.6 21 24 21.4C20 21.8 16.6 20.4 17 17.6Z" fill="#d1e6e2"/></svg>
<svg class="r" style="left:264px;top:1042px" width="29" height="25" viewBox="0 0 29 25"><path d="M0 2.2Q0 0.8 1.4 0.8H10.6L12.6 3.2V6H0Z" fill="#e8a70c"/><rect x="0" y="3.2" width="27.6" height="20.4" rx="1.2" fill="#fdd867"/><rect x="0" y="16" width="27.6" height="7.6" fill="#fbd057"/><path d="M5 23.6V14.6Q5 12.8 6.8 12.8H21.4Q23.2 12.8 23.2 14.6V23.6H19.2V17.4H9.2V23.6Z" fill="#2b8be0"/></svg>
<svg class="r" style="left:325px;top:1039px" width="32" height="32" viewBox="0 0 32 32"><circle cx="15" cy="15.2" r="14.6" fill="#e33b2e"/><path d="M15 15.2L28.7 10.2A14.6 14.6 0 0 1 12.5 29.6Z" fill="#fdc92f"/><path d="M15 15.2L12.5 29.6A14.6 14.6 0 0 1 2.4 7.9Z" fill="#1da462"/><path d="M15 8.4H28.4L29.2 12L20 14Z" fill="#fdc92f"/><path d="M9.2 18.6L2.6 7.6L1 11L7 21Z" fill="#1da462"/><circle cx="15" cy="15.2" r="6.8" fill="#fff"/><circle cx="15" cy="15.2" r="5.4" fill="#4285f4"/><clipPath id="av"><circle cx="21.9" cy="22.9" r="9.8"/></clipPath><g clip-path="url(#av)"><rect x="10" y="12" width="24" height="8" fill="#a29c8f"/><rect x="10" y="18.4" width="24" height="3.6" fill="#7f9fcd"/><rect x="10" y="22" width="24" height="5.4" fill="#97968a"/><rect x="10" y="27.2" width="24" height="6" fill="#cdbb3c"/><rect x="10" y="31" width="24" height="3" fill="#8f9a50"/></g></svg>
<svg class="r" style="left:390px;top:1040px" width="23" height="30" viewBox="0 0 23 30"><rect x="0.2" y="0.2" width="22.8" height="29.6" rx="1.6" fill="#707d8b"/><rect x="2.8" y="2.8" width="17.6" height="5.4" fill="#45d2f6"/><g fill="#d6dce4"><rect x="3.2" y="10.2" width="4.9" height="4.8"/><rect x="9.2" y="10.2" width="4.9" height="4.8"/><rect x="15.1" y="10.2" width="4.9" height="4.8"/><rect x="3.2" y="16.2" width="4.9" height="4.8"/><rect x="9.2" y="16.2" width="4.9" height="4.8"/><rect x="3.2" y="22.1" width="4.9" height="4.8"/><rect x="9.2" y="22.1" width="4.9" height="4.8"/></g><rect x="15.1" y="16.2" width="4.9" height="10.7" fill="#17417f"/></svg>
<svg class="r" style="left:449px;top:1040px" width="31" height="30" viewBox="0 0 31 30"><path d="M2 18C0 12 6 6 14 5C22 4 27 8 26.4 14C26 19 21 20 19 22C17.4 23.6 17 26 13 26C8 26 3.4 22.6 2 18Z" fill="#b9dcf2" stroke="#8fbfe0" stroke-width="1"/><circle cx="13" cy="17.6" r="2.2" fill="#eef6fb" stroke="#9bbdd6" stroke-width=".8"/><circle cx="5.4" cy="15" r="2.4" fill="#e34a3a"/><circle cx="10" cy="10.4" r="2.4" fill="#58b947"/><circle cx="16" cy="8" r="2.4" fill="#f4c020"/><path d="M13.4 28L22.4 7.4L24.4 8.2L15.2 28.6Z" fill="#e0852a"/><path d="M22 8L24.4 1.2Q27 0 28.6 3L24.8 8.8Z" fill="#d6b58a"/></svg>
<svg class="r" style="left:511px;top:1040px" width="29" height="29" viewBox="0 0 29 29"><rect x="13" y="4.4" width="14.4" height="19.6" rx="1" fill="#fff" stroke="#2b579a" stroke-width="1.3"/><path d="M17.6 8.4h7.4M17.6 11.6h7.4M17.6 14.8h7.4M17.6 18h7.4M17.6 21.2h7.4" stroke="#2b579a" stroke-width="1.3"/><path d="M1 3.8L16.4 0.8V28L1 25Z" fill="#2b579a"/><path d="M3.6 10L5.8 19.4L8.4 11.6L11 19.4L13.4 10" fill="none" stroke="#fff" stroke-width="1.9" stroke-linejoin="miter"/></svg>
<svg class="r" style="left:573px;top:1040px" width="29" height="29" viewBox="0 0 29 29"><defs><linearGradient id="og" x1="0" y1="0" x2="1" y2="0"><stop offset="0" stop-color="#f01822"/><stop offset=".55" stop-color="#e30f1c"/><stop offset="1" stop-color="#b80a16"/></linearGradient></defs><circle cx="14.4" cy="14.5" r="14.3" fill="url(#og)"/><ellipse cx="13.6" cy="14.5" rx="6.7" ry="10.3" fill="#d1e6e2"/></svg>
<svg class="r" style="left:1549px;top:1050px" width="18" height="11" viewBox="0 0 18 11"><path d="M1.4 9.6L9 2L16.6 9.6" fill="none" stroke="#111" stroke-width="1.3"/></svg>
<svg class="r" style="left:1577px;top:1046px" width="22" height="16" viewBox="0 0 22 16"><path d="M5.4 14.2C2.6 14.2 1 12.4 1 10.4C1 8.4 2.4 7 4.4 6.8C5 3.6 7.4 1.6 10.6 1.6C13.4 1.6 15.6 3.2 16.4 5.8C19 6 20.6 7.8 20.6 10C20.6 12.4 18.8 14.2 16.4 14.2Z" fill="#8e8e8e" stroke="#222" stroke-width="1.2"/><path d="M3 11C7 6.6 13 6 19.6 8.4C20.4 9.4 20.8 11 20 12.4C19.2 13.6 18 14.2 16.4 14.2H5.4C4 14.2 3 13 3 11Z" fill="#c4c4c4"/></svg>
<svg class="r" style="left:1611px;top:1044px" width="17" height="21" viewBox="0 0 17 21"><rect x="1.6" y="5.4" width="9.4" height="9.8" rx="2" fill="none" stroke="#111" stroke-width="1.3"/><path d="M11 9L15 6.4V14.2L11 11.6" fill="none" stroke="#111" stroke-width="1.3"/><path d="M3.4 2.4C5.4 1.2 8.2 1.2 10.2 2.4M3.4 18.4C5.4 19.6 8.2 19.6 10.2 18.4" fill="none" stroke="#111" stroke-width="1.2"/></svg>
<svg class="r" style="left:1637px;top:1047px" width="22" height="15" viewBox="0 0 22 15"><rect x="4.6" y="3.4" width="15.6" height="9.8" fill="none" stroke="#111" stroke-width="1.1"/><rect x="6.2" y="5" width="12.4" height="6.6" fill="#000"/><rect x="20.6" y="6.4" width="1.3" height="3.8" fill="#111"/><path d="M1.6 0.6V3.4M4 0.6V3.4M0.6 3.4H5V5.6Q5 7.4 2.8 7.4Q0.6 7.4 0.6 5.6ZM2.8 7.4V12.6H4.6" fill="#d1e6e2" stroke="#111" stroke-width="1.1"/></svg>
<svg class="r" style="left:1670px;top:1046px" width="19" height="18" viewBox="0 0 19 18"><circle cx="15" cy="15.2" r="1.5" fill="#111"/><path d="M10 15.6A5.4 5.4 0 0 1 15.4 10.2" fill="none" stroke="#111" stroke-width="1.3"/><path d="M6 15.6A9.4 9.4 0 0 1 15.4 6.2" fill="none" stroke="#666" stroke-width="1.2"/><path d="M1.8 15.6A13.6 13.6 0 0 1 15.4 2" fill="none" stroke="#666" stroke-width="1.2"/></svg>
<svg class="r" style="left:1697px;top:1048px" width="20" height="15" viewBox="0 0 20 15"><path d="M1 4.8H4L8 1.2V13.4L4 9.8H1Z" fill="none" stroke="#111" stroke-width="1.2" stroke-linejoin="round"/><path d="M11.4 3.6L18.4 10.8M18.4 3.6L11.4 10.8" stroke="#111" stroke-width="1.3"/></svg>
<div class="t" style="left:1732.5px;top:1048.1px;font-size:15px;color:#1a1a1a;transform:scaleX(0.8490);transform-origin:0 0;">РУС</div>
<div class="t" style="left:1793.8px;top:1036.1px;font-size:15px;color:#1a1a1a;letter-spacing:-0.77px;">15:37</div>
<div class="t" style="left:1777.5px;top:1059.3px;font-size:15px;color:#1a1a1a;letter-spacing:-0.60px;">16.11.2022</div>
<svg class="r" style="left:1868px;top:1045px" width="34" height="32" viewBox="0 0 34 32"><path d="M1 0.6H21V15.4H8.4L4.4 19.4V15.4H1Z" fill="#000"/><path d="M4.4 4.4H17.6M4.4 7.8H17.6M4.4 11.2H13" stroke="#cfe4e2" stroke-width="1.1"/><circle cx="20.8" cy="19.6" r="9.6" fill="#d4d4d4" stroke="#555" stroke-width="1.2"/></svg>
<div class="t" style="left:1885.0px;top:1057.9px;font-size:14.5px;color:#000;">1</div>
<div class="r" style="left:1914px;top:1030px;width:1px;height:50px;background:#9fb3b1;"></div>
</body></html>
